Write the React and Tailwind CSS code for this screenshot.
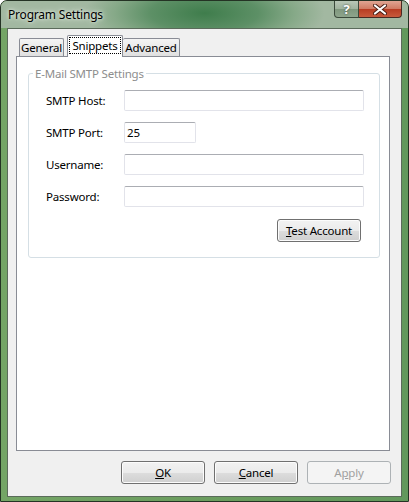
import React from "react";

const font = "font-['Segoe_UI','Noto_Sans',sans-serif] tracking-[-0.2px]";

function Field({ label, value = "", width = "w-[240px]" }) {
  return (
    <div className="flex items-center h-[21px]">
      <span className="w-[78px] text-[11.5px] text-black">{label}</span>
      <div
        className={`${width} h-[21px] bg-white border border-[#e2e3ea] border-t-[#abadb3] rounded-[2px] text-[11.5px] leading-[19px] pl-[2px] text-black`}
      >
        {value}
      </div>
    </div>
  );
}

function Button({ children, disabled, className = "" }) {
  return (
    <div
      className={`w-[84px] h-[23px] rounded-[3px] border flex items-center justify-center text-[11.5px] ${
        disabled
          ? "border-[#adb2b5] bg-[#f4f4f4] text-[#a0a0a0]"
          : "border-[#707070] text-black bg-[linear-gradient(#f2f2f2_0%,#ebebeb_50%,#dddddd_51%,#cfcfcf_100%)] shadow-[inset_0_0_0_1px_#fcfcfc]"
      } ${className}`}
    >
      {children}
    </div>
  );
}

export default function App() {
  return (
    <div className={`${font} w-[409px] h-[502px] flex flex-col border border-[#243324] rounded-t-[7px] bg-[linear-gradient(90deg,#74a566,#6b9d5f_50%,#62985c)] overflow-hidden`}>
      {/* title bar */}
      <div className="relative h-[27px] flex items-start bg-[radial-gradient(ellipse_120px_40px_at_50%_45%,#3f7d4c_0%,#5d9066_45%,#86a988_75%,#a2b8a1_100%)]">
        <span className="pl-[7px] pt-[5px] text-[12px] text-black [text-shadow:0_0_6px_#e8efe6,0_0_3px_#e8efe6]">
          Program Settings
        </span>
        <div className="ml-auto mr-[6px] flex h-[17px]">
          <div className="w-[25px] h-[17px] border border-[#3b4a3b] border-t-0 rounded-bl-[4px] bg-[linear-gradient(#b9c7b7_0%,#9fb29d_50%,#7f977d_51%,#8ea58c_100%)] flex items-center justify-center text-white font-bold text-[13px] leading-none [text-shadow:0_0_2px_#303a30]">
            ?
          </div>
          <div className="w-[43px] h-[17px] border border-[#4a2a22] border-t-0 border-l-0 rounded-br-[4px] bg-[linear-gradient(#e0a593_0%,#cf7a62_50%,#b73c22_51%,#c85a3c_100%)] flex items-center justify-center">
            <svg width="14" height="11" viewBox="0 0 14 11">
              <path d="M2 1.5 L12 9.5 M12 1.5 L2 9.5" stroke="#4a1e14" strokeWidth="4" strokeLinecap="round" />
              <path d="M2 1.5 L12 9.5 M12 1.5 L2 9.5" stroke="#ffffff" strokeWidth="2.2" strokeLinecap="round" />
            </svg>
          </div>
        </div>
      </div>

      {/* client */}
      <div className="mx-[6px] h-[469px] border border-[#5b6b5b] bg-[#f0f0f0] flex flex-col px-[8px] pt-[6px]">
        {/* tabs */}
        <div className="flex items-end h-[21px] pl-[3px] relative z-10">
          <div className="w-[45px] h-[18px] border border-[#898c95] border-b-0 rounded-t-[2px] bg-[linear-gradient(#f4f4f4,#e0e0e0)] text-[11.5px] flex items-center justify-center">
            General
          </div>
          <div className="w-[56px] h-[22px] ml-[3px] -mb-[1px] border border-[#898c95] border-b-0 rounded-t-[2px] bg-white text-[11.5px] flex items-start justify-center pt-[2px]">
            <span className="outline outline-1 outline-dotted outline-black px-[2px] leading-[15px]">Snippets</span>
          </div>
          <div className="w-[57px] h-[18px] border border-[#898c95] border-b-0 border-l-0 rounded-t-[2px] bg-[linear-gradient(#f4f4f4,#e0e0e0)] text-[11.5px] flex items-center justify-center">
            Advanced
          </div>
        </div>

        {/* tab panel */}
        <div className="w-[374px] h-[395px] border border-[#898c95] bg-white pt-[16px] pl-[11px] pr-[9px]">
          <div className="relative border border-[#d5dfe5] rounded-[3px] h-[185px] pt-[16px] pl-[17px] pr-[15px] flex flex-col gap-[11px]">
            <span className="absolute -top-[9px] left-[4px] bg-white px-[2px] text-[11.5px] text-[#8d8d8d]">
              E-Mail SMTP Settings
            </span>
            <Field label="SMTP Host:" />
            <Field label="SMTP Port:" value="25" width="w-[72px]" />
            <Field label="Username:" />
            <Field label="Password:" />
            <div className="flex justify-end pr-[3px] mt-[1px]">
              <Button>
                <span><u>T</u>est Account</span>
              </Button>
            </div>
          </div>
        </div>

        {/* bottom buttons */}
        <div className="flex justify-end gap-[9px] mt-[10px] pr-[2px]">
          <Button><span><u>O</u>K</span></Button>
          <Button><span><u>C</u>ancel</span></Button>
          <Button disabled><span>A<u>p</u>ply</span></Button>
        </div>
      </div>
    </div>
  );
}
